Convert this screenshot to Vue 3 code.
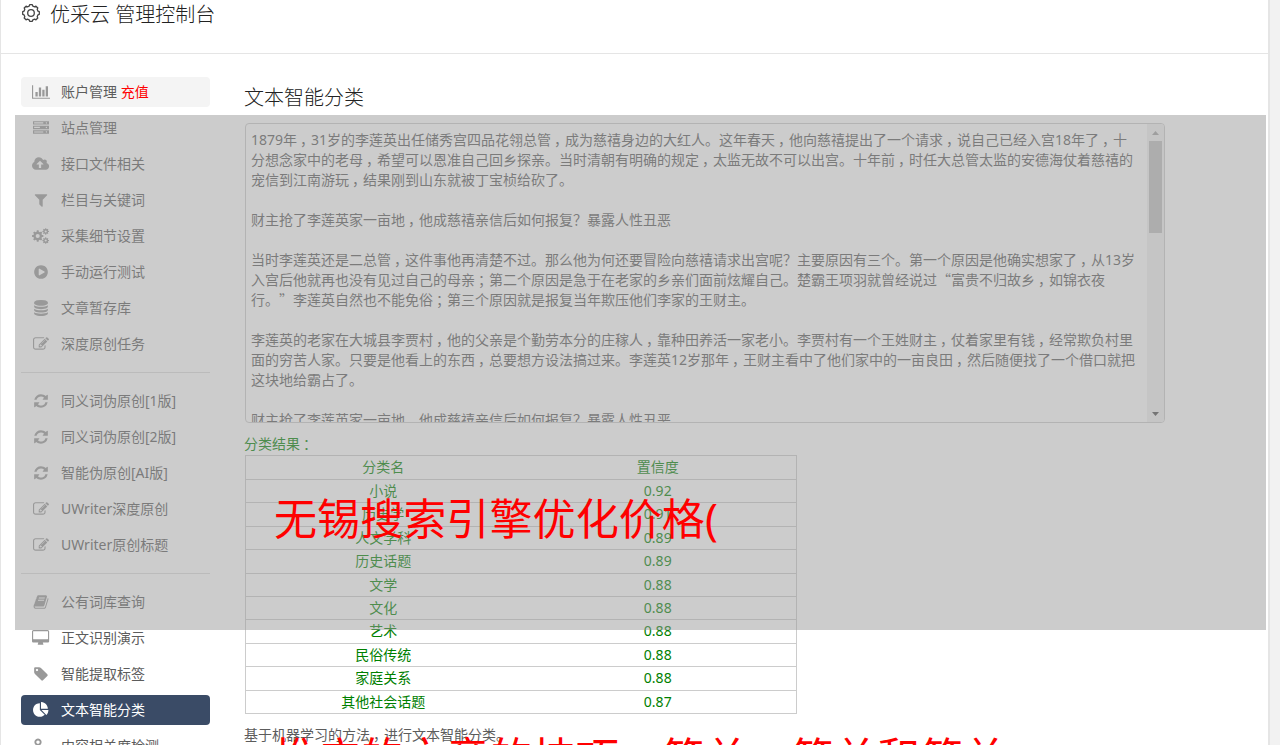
<template>
  <div class="page">
    <header class="header">
      <svg class="logo" viewBox="0 0 20 20" fill="none" stroke="#444" stroke-width="1.3">
        <path :d="gearOutline" stroke-linejoin="round" />
        <circle cx="10" cy="10" r="3.3" />
      </svg>
      <span>优采云 管理控制台</span>
    </header>

    <div class="body">
      <aside class="sidebar">
        <template v-for="(group, index) in menu" :key="index">
          <div v-if="index > 0" class="divider"></div>
          <div
            v-for="item in group"
            :key="item.label"
            class="menu-item"
            :class="{ hover: item.hover, active: item.active }"
          >
            <span class="menu-icon">
              <svg :viewBox="`0 0 ${icons[item.icon].w} 1792`">
                <path :d="icons[item.icon].d" fill-rule="evenodd" />
              </svg>
            </span>
            <span>{{ item.label }} <em v-if="item.extra">{{ item.extra }}</em></span>
          </div>
        </template>
      </aside>

      <main class="content">
        <h3>文本智能分类</h3>
        <div class="textarea">
          <div class="text">
            <div v-for="(line, i) in lines" :key="i" class="line">
              <span v-for="(part, j) in splitLine(line)" :key="j" :class="part.type">{{ part.text }}</span>
            </div>
          </div>
          <div class="scrollbar">
            <svg class="arrow" viewBox="0 0 7 4"><path d="M3.5 0L7 4H0z" fill="#a3a3a3" /></svg>
            <div class="thumb"></div>
            <svg class="arrow" viewBox="0 0 7 4"><path d="M0 0H7L3.5 4z" fill="#505050" /></svg>
          </div>
        </div>

        <div class="result">
          <div class="result-title">分类结果<span class="mark">：</span></div>
          <div class="table">
            <div v-for="row in results" :key="row[0]" class="row">
              <span>{{ row[0] }}</span>
              <span>{{ row[1] }}</span>
            </div>
          </div>
        </div>
        <p class="desc">基于机器学习的方法<span class="mark">，</span>进行文本智能分类。</p>
      </main>
    </div>

    <div class="mask"></div>
    <div class="caption">
      <div>无锡搜索引擎优化价格(</div>
      <div>推广的文章的技巧，简单、简单和简单</div>
    </div>
  </div>
</template>

<script setup>
const menu = [
  [
    { label: '账户管理', icon: 'chart', extra: '充值', hover: true },
    { label: '站点管理', icon: 'server' },
    { label: '接口文件相关', icon: 'cloud' },
    { label: '栏目与关键词', icon: 'filter' },
    { label: '采集细节设置', icon: 'cogs' },
    { label: '手动运行测试', icon: 'play' },
    { label: '文章暂存库', icon: 'database' },
    { label: '深度原创任务', icon: 'edit' }
  ],
  [
    { label: '同义词伪原创[1版]', icon: 'refresh' },
    { label: '同义词伪原创[2版]', icon: 'refresh' },
    { label: '智能伪原创[AI版]', icon: 'refresh' },
    { label: 'UWriter深度原创', icon: 'edit' },
    { label: 'UWriter原创标题', icon: 'edit' }
  ],
  [
    { label: '公有词库查询', icon: 'book' },
    { label: '正文识别演示', icon: 'desktop' },
    { label: '智能提取标签', icon: 'tag' },
    { label: '文本智能分类', icon: 'pie', active: true },
    { label: '内容相关度检测', icon: 'link' }
  ]
]

const lines = [
  '1879年，31岁的李莲英出任储秀宫四品花翎总管，成为慈禧身边的大红人。这年春天，他向慈禧提出了一个请求，说自己已经入宫18年了，十',
  '分想念家中的老母，希望可以恩准自己回乡探亲。当时清朝有明确的规定，太监无故不可以出宫。十年前，时任大总管太监的安德海仗着慈禧的',
  '宠信到江南游玩，结果刚到山东就被丁宝桢给砍了。',
  '',
  '财主抢了李莲英家一亩地，他成慈禧亲信后如何报复？暴露人性丑恶',
  '',
  '当时李莲英还是二总管，这件事他再清楚不过。那么他为何还要冒险向慈禧请求出宫呢？主要原因有三个。第一个原因是他确实想家了，从13岁',
  '入宫后他就再也没有见过自己的母亲；第二个原因是急于在老家的乡亲们面前炫耀自己。楚霸王项羽就曾经说过“富贵不归故乡，如锦衣夜',
  '行。”李莲英自然也不能免俗；第三个原因就是报复当年欺压他们李家的王财主。',
  '',
  '李莲英的老家在大城县李贾村，他的父亲是个勤劳本分的庄稼人，靠种田养活一家老小。李贾村有一个王姓财主，仗着家里有钱，经常欺负村里',
  '面的穷苦人家。只要是他看上的东西，总要想方设法搞过来。李莲英12岁那年，王财主看中了他们家中的一亩良田，然后随便找了一个借口就把',
  '这块地给霸占了。',
  '',
  '财主抢了李莲英家一亩地，他成慈禧亲信后如何报复？暴露人性丑恶'
]

const results = [
  ['分类名', '置信度'],
  ['小说', '0.92'],
  ['历史学', '0.91'],
  ['人文学科', '0.89'],
  ['历史话题', '0.89'],
  ['文学', '0.88'],
  ['文化', '0.88'],
  ['艺术', '0.88'],
  ['民俗传统', '0.88'],
  ['家庭关系', '0.88'],
  ['其他社会话题', '0.87']
]

// 标点单独成段，便于调整位置
function splitLine(line) {
  return line.split(/([，；？“”])/).filter(Boolean).map((text) => ({
    text,
    type: /[，；]/.test(text) ? 'mark' : /[“”]/.test(text) ? 'quote' : 'plain'
  }))
}

// 齿轮路径
function gear(cx, cy, r, depth, teeth, hole) {
  const pts = []
  for (let i = 0; i < teeth; i++) {
    const list = [[-0.32, -depth], [-0.2, 0], [0.2, 0], [0.32, -depth]]
    list.forEach(([o, d]) => {
      const a = ((i + o) / teeth) * Math.PI * 2
      pts.push(`${(cx + (r + d) * Math.cos(a)).toFixed(2)} ${(cy + (r + d) * Math.sin(a)).toFixed(2)}`)
    })
  }
  const ring = hole
    ? `M${cx - hole} ${cy}a${hole} ${hole} 0 1 0 ${hole * 2} 0a${hole} ${hole} 0 1 0 ${-hole * 2} 0z`
    : ''
  return `M${pts.join('L')}z${ring}`
}

const gearOutline = gear(10, 10, 8.4, 1.2, 8, 0)

const icons = {
  chart: {
    w: 2048,
    d: 'M640 896v512h-256v-512h256zm384-512v1024h-256v-1024h256zm1024 1152v128h-2048v-1536h128v1408h1920zm-640-896v768h-256v-768h256zm384-384v1152h-256v-1152h256z'
  },
  server: {
    w: 1792,
    d: 'M0 128h1792v384h-1792zM128 256v128h1024v-128zM1500 250a70 70 0 1 0 .1 0zM0 640h1792v384h-1792zM128 768v128h640v-128zM1500 768a70 70 0 1 0 .1 0zM0 1152h1792v384h-1792zM128 1280v128h1024v-128zM1500 1270a70 70 0 1 0 .1 0z'
  },
  cloud: {
    w: 1920,
    d: 'M1280 928q0-14-9-23l-352-352q-9-9-23-9t-23 9l-351 351q-10 12-10 24 0 14 9 23t23 9h224v352q0 13 9.5 22.5t22.5 9.5h192q13 0 22.5-9.5t9.5-22.5v-352h224q13 0 22.5-9.5t9.5-22.5zm640 224q0 159-112.5 271.5t-271.5 112.5h-1088q-185 0-316.5-131.5t-131.5-316.5q0-130 70-240t188-165q-2-30-2-43 0-212 150-362t362-150q156 0 285.5 87t188.5 231q71-62 166-62 106 0 181 75t75 181q0 76-41 138 130 31 213.5 135.5t83.5 238.5z'
  },
  filter: {
    w: 1792,
    d: 'M1595 295q17 41-14 70l-493 493v742q0 42-39 59-13 5-25 5-27 0-45-19l-256-256q-19-19-19-45v-486l-493-493q-31-29-14-70 17-39 59-39h1280q42 0 59 39z'
  },
  cogs: {
    w: 1920,
    d: gear(640, 896, 640, 150, 8, 230) + gear(1536, 384, 370, 90, 8, 118) + gear(1536, 1408, 370, 90, 8, 118)
  },
  play: {
    w: 1792,
    d: 'M896 128q209 0 385.5 103t279.5 279.5 103 385.5-103 385.5-279.5 279.5-385.5 103-385.5-103-279.5-279.5-103-385.5 103-385.5 279.5-279.5 385.5-103zm384 823q32-18 32-55t-32-55l-544-320q-31-19-64-1-32 19-32 56v640q0 37 32 56 16 8 32 8 17 0 32-9z'
  },
  database: {
    w: 1792,
    d: 'M896 768q237 0 443-43t325-127v170q0 69-103 128t-280 93.5-385 34.5-385-34.5-280-93.5-103-128v-170q119 84 325 127t443 43zm0 768q237 0 443-43t325-127v170q0 69-103 128t-280 93.5-385 34.5-385-34.5-280-93.5-103-128v-170q119 84 325 127t443 43zm0-384q237 0 443-43t325-127v170q0 69-103 128t-280 93.5-385 34.5-385-34.5-280-93.5-103-128v-170q119 84 325 127t443 43zm0-1152q208 0 385 34.5t280 93.5 103 128v128q0 69-103 128t-280 93.5-385 34.5-385-34.5-280-93.5-103-128v-128q0-69 103-128t280-93.5 385-34.5z'
  },
  edit: {
    w: 1792,
    d: 'M888 1184l116-116-152-152-116 116v56h96v96h56zm440-720q-16-16-33 1l-350 350q-17 17-1 33t33-1l350-350q17-17 1-33zm80 594v190q0 119-84.5 203.5t-203.5 84.5h-832q-119 0-203.5-84.5t-84.5-203.5v-832q0-119 84.5-203.5t203.5-84.5h832q63 0 117 25 15 7 18 23 3 17-9 29l-49 49q-14 14-32 8-23-6-45-6h-832q-66 0-113 47t-47 113v832q0 66 47 113t113 47h832q66 0 113-47t47-113v-126q0-13 9-22l64-64q15-15 35-7t20 29zm-96-738l288 288-672 672h-288v-288zm444 132l-92 92-288-288 92-92q28-28 68-28t68 28l152 152q28 28 28 68t-28 68z'
  },
  refresh: {
    w: 1792,
    d: 'M1639 1056q0 5-1 7-64 268-268 434.5t-478 166.5q-146 0-282.5-55t-243.5-157l-129 129q-19 19-45 19t-45-19-19-45v-448q0-26 19-45t45-19h448q26 0 45 19t19 45-19 45l-137 137q71 66 161 102t187 36q134 0 250-65t186-179q11-17 53-117 8-23 30-23h192q13 0 22.5 9.5t9.5 22.5zm25-800v448q0 26-19 45t-45 19h-448q-26 0-45-19t-19-45 19-45l138-138q-148-137-349-137-134 0-250 65t-186 179q-11 17-53 117-8 23-30 23h-199q-13 0-22.5-9.5t-9.5-22.5v-7q65-268 270-434.5t480-166.5q146 0 284 55.5t245 156.5l130-129q19-19 45-19t45 19 19 45z'
  },
  book: {
    w: 1792,
    d: 'M1703 478q40 57 18 129l-275 906q-19 64-76.5 107.5t-122.5 43.5h-923q-77 0-148.5-53.5t-99.5-131.5q-24-67-2-127 0-4 3-27t4-37q1-8-3-21.5t-3-19.5q2-11 8-21t16.5-23.5 16.5-23.5q23-38 45-91.5t30-91.5q3-10 .5-30t-.5-28q3-11 17-28t17-23q21-36 42-92t25-90q1-9-2.5-32t.5-28q4-13 22-30.5t22-22.5q19-26 42.5-84.5t27.5-96.5q1-8-3-25.5t-2-26.5q2-8 9-18t18-23 17-21q8-12 16.5-30.5t15-35 16-36 19.5-32 26.5-23.5 36-11.5 47.5 5.5l-1 3q38-9 51-9h761q74 0 114 56t18 130l-274 906q-36 119-71.5 153.5t-128.5 34.5h-869q-27 0-38 15-11 16-1 43 24 70 144 70h923q29 0 56-15.5t35-41.5l300-987q7-22 5-57 38 15 59 43zm-1064 2q-4 13 2 22.5t20 9.5h608q13 0 25.5-9.5t16.5-22.5l21-64q4-13-2-22.5t-20-9.5h-608q-13 0-25.5 9.5t-16.5 22.5zm-83 256q-4 13 2 22.5t20 9.5h608q13 0 25.5-9.5t16.5-22.5l21-64q4-13-2-22.5t-20-9.5h-608q-13 0-25.5 9.5t-16.5 22.5z'
  },
  desktop: {
    w: 1920,
    d: 'M1792 992v-832q0-13-9.5-22.5t-22.5-9.5h-1600q-13 0-22.5 9.5t-9.5 22.5v832q0 13 9.5 22.5t22.5 9.5h1600q13 0 22.5-9.5t9.5-22.5zm128-832v1088q0 66-47 113t-113 47h-544q0 37 16 77.5t32 71 16 43.5q0 26-19 45t-45 19h-512q-26 0-45-19t-19-45q0-14 16-44t32-70 16-78h-544q-66 0-113-47t-47-113v-1088q0-66 47-113t113-47h1600q66 0 113 47t47 113z'
  },
  tag: {
    w: 1792,
    d: 'M576 448q0-53-37.5-90.5t-90.5-37.5-90.5 37.5-37.5 90.5 37.5 90.5 90.5 37.5 90.5-37.5 37.5-90.5zm1067 576q0 53-37 90l-491 492q-39 37-91 37-53 0-90-37l-715-716q-38-37-64.5-101t-26.5-117v-416q0-52 38-90t90-38h416q53 0 117 26.5t102 64.5l715 714q37 39 37 91z'
  },
  pie: {
    w: 1792,
    d: 'M768 890l546 546q-106 108-247.5 168t-298.5 60q-209 0-385.5-103t-279.5-279.5-103-385.5 103-385.5 279.5-279.5 385.5-103v762zm187 6h773q0 157-60 298.5t-168 247.5zm709-128h-768v-768q209 0 385.5 103t279.5 279.5 103 385.5z'
  },
  link: {
    w: 1792,
    d: 'M560 60a400 400 0 1 0 .1 0zM560 270a190 190 0 1 1-.1 0zM1240 820a400 400 0 1 0 .1 0zM1240 1030a190 190 0 1 1-.1 0z'
  }
}
</script>

<style>
body {
  background: #f2f2f2;
  overflow: hidden;
}
</style>

<style scoped>
.page {
  position: relative;
  box-sizing: border-box;
  width: 1270px;
  height: 745px;
  overflow: hidden;
  background: #fff;
  border-left: 1px solid #e5e5e5;
  border-right: 2px solid #e5e5e5;
  font-family: "Noto Sans", "Noto Sans CJK SC", sans-serif;
  font-size: 14px;
  color: #5c5c5c;
  text-spacing-trim: space-all;
}
.header {
  display: flex;
  align-items: flex-start;
  gap: 9px;
  height: 53px;
  padding-left: 20px;
  border-bottom: 1px solid #e5e5e5;
  font-size: 20px;
  font-weight: 300;
  line-height: 30px;
  color: #222;
}
.logo {
  width: 20px;
  height: 20px;
  margin-top: 3px;
}
.body {
  display: flex;
  gap: 34px;
  padding: 23px 0 0 20px;
}
.sidebar {
  display: flex;
  flex-direction: column;
  width: 189px;
  flex-shrink: 0;
}
.menu-item {
  display: flex;
  align-items: center;
  height: 30px;
  margin-bottom: 6px;
  border-radius: 4px;
  line-height: 30px;
  white-space: nowrap;
}
.menu-item.hover {
  background: #f4f4f4;
}
.menu-item.active {
  background: #3a4b66;
  color: #fff;
}
.menu-item em {
  font-style: normal;
  color: #f00;
}
.menu-icon {
  display: flex;
  justify-content: center;
  width: 40px;
}
.menu-icon svg {
  height: 16px;
  fill: #999;
}
.active .menu-icon svg {
  fill: #fff;
}
.divider {
  height: 1px;
  margin: 7px 0 13px;
  background: #ddd;
}
.content {
  width: 921px;
}
.content h3 {
  margin: 6px 0 11px;
  font-size: 20px;
  font-weight: 300;
  line-height: 29px;
  color: #222;
}
.textarea {
  display: flex;
  justify-content: space-between;
  box-sizing: border-box;
  height: 300px;
  margin-left: 1px;
  overflow: hidden;
  border: 1px solid #ccc;
  border-radius: 4px;
}
.text {
  padding: 6px 0 0 5px;
}
.line {
  height: 20px;
  line-height: 20px;
  white-space: nowrap;
}
.mark {
  display: inline-block;
  line-height: 1;
  transform: translateX(3px);
}
.quote {
  font-family: "Noto Sans CJK SC", sans-serif;
  line-height: 0;
}
.scrollbar {
  display: flex;
  flex-direction: column;
  align-items: center;
  width: 17px;
  background: #f1f1f1;
}
.arrow {
  width: 7px;
  height: 4px;
  margin: 7px 0 6px;
}
.thumb {
  width: 13px;
  height: 92px;
  margin-bottom: auto;
  background: #c1c1c1;
}
.result {
  color: #008000;
}
.result-title {
  padding-top: 10px;
  height: 22px;
  line-height: 22px;
}
.table {
  box-sizing: border-box;
  width: 552px;
  height: 259px;
  display: flex;
  flex-direction: column;
  margin-left: 1px;
  border: 1px solid #ccc;
  border-bottom: 0;
}
.row {
  display: grid;
  grid-template-columns: 1fr 1fr;
  flex: 1;
  box-sizing: border-box;
  padding-right: 1px;
  border-bottom: 1px solid #ccc;
  line-height: 22px;
  text-align: center;
}
.row:first-child {
  flex: 0 0 24px;
}
.desc {
  margin: 10px 0 0;
  line-height: 22px;
}
.mask {
  position: absolute;
  left: 14px;
  top: 115px;
  width: 1251px;
  height: 515px;
  background: rgba(153, 153, 153, 0.5);
}
.caption {
  position: absolute;
  left: 273px;
  top: 399px;
  font-size: 43.1px;
  font-weight: 400;
  line-height: 239px;
  white-space: nowrap;
  color: #f00;
}
</style>
